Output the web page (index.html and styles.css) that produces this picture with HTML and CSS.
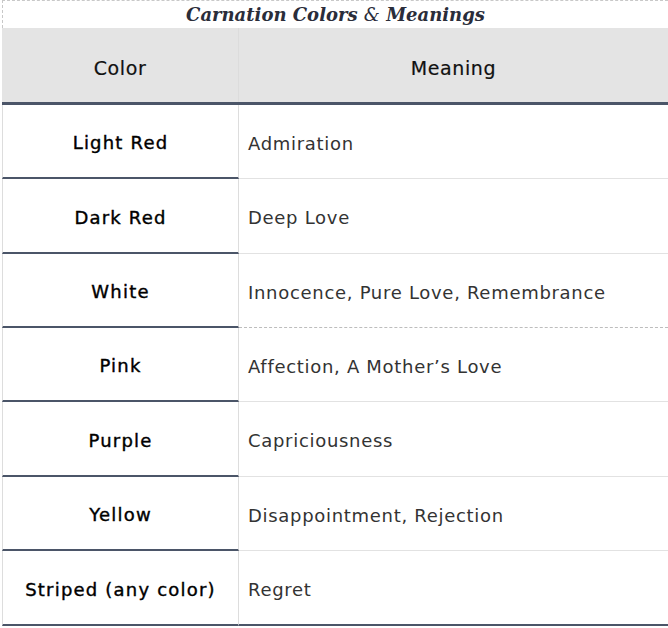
FILE: index.html
```html
<!DOCTYPE html>
<html>
<head>
<meta charset="utf-8">
<link rel="stylesheet" href="styles.css">
</head>
<body>
<div class="wrap">
  <div class="title">Carnation Colors <span class="amp">&amp;</span> Meanings</div>
  <div class="head">
    <div class="hcell left">Color</div>
    <div class="hcell">Meaning</div>
  </div>
  <div class="row r74"><div class="cell left">Light Red</div><div class="cell right">Admiration</div></div>
  <div class="row r75"><div class="cell left">Dark Red</div><div class="cell right">Deep Love</div></div>
  <div class="row r74"><div class="cell left">White</div><div class="cell right dashed">Innocence, Pure Love, Remembrance</div></div>
  <div class="row r74"><div class="cell left">Pink</div><div class="cell right">Affection, A Mother’s Love</div></div>
  <div class="row r75"><div class="cell left">Purple</div><div class="cell right">Capriciousness</div></div>
  <div class="row r74"><div class="cell left">Yellow</div><div class="cell right">Disappointment, Rejection</div></div>
  <div class="row r75 last"><div class="cell left">Striped (any color)</div><div class="cell right">Regret</div></div>
</div>
</body>
</html>
```
FILE: styles.css
```css
html, body { margin: 0; padding: 0; background: #fff; }
.wrap { margin: 0 0 0 2px; width: 666px; }
.title {
  height: 27px;
  border: 1px dashed #c8c8c8;
  border-bottom: none;
  border-right: none;
  text-align: center;
  font-family: "DejaVu Serif", "Liberation Serif", serif;
  font-weight: bold;
  font-style: italic;
  font-size: 18px;
  line-height: 27px;
  color: #2a2d3a;
}
.amp { font-weight: normal; }
.head {
  display: grid;
  grid-template-columns: 237px 1fr;
  height: 74px;
  background: #e4e4e4;
  border-bottom: 3px solid #4b5568;
}
.hcell {
  display: flex;
  align-items: center;
  justify-content: center;
  font-family: "DejaVu Sans", sans-serif;
  font-size: 19px;
  letter-spacing: 0.6px;
  color: #111;
  padding-top: 5px;
  -webkit-text-stroke: 0.2px #111;
}
.hcell.left { border-right: 1px solid #dcdcdc; }
.row {
  display: grid;
  grid-template-columns: 237px 1fr;
}
.r74 { height: 74px; }
.r75 { height: 75px; }
.cell {
  display: flex;
  align-items: center;
  font-family: "DejaVu Sans", sans-serif;
  padding-top: 3px;
  box-sizing: border-box;
}
.cell.left {
  justify-content: center;
  font-size: 18px;
  letter-spacing: 1.2px;
  color: #000;
  -webkit-text-stroke: 0.4px #000;
  border-left: 1px solid #dddddd;
  border-right: 1px solid #dddddd;
  border-bottom: 2px solid #4b5568;
}
.cell.right {
  padding-left: 9px;
  font-size: 18px;
  letter-spacing: 0.7px;
  color: #333;
  border-bottom: 1px solid #e2e2e2;
}
.cell.right.dashed { border-bottom: 1px dashed #bdbdbd; }
.row.last .cell.right { border-bottom: 2px solid #4b5568; }
```
